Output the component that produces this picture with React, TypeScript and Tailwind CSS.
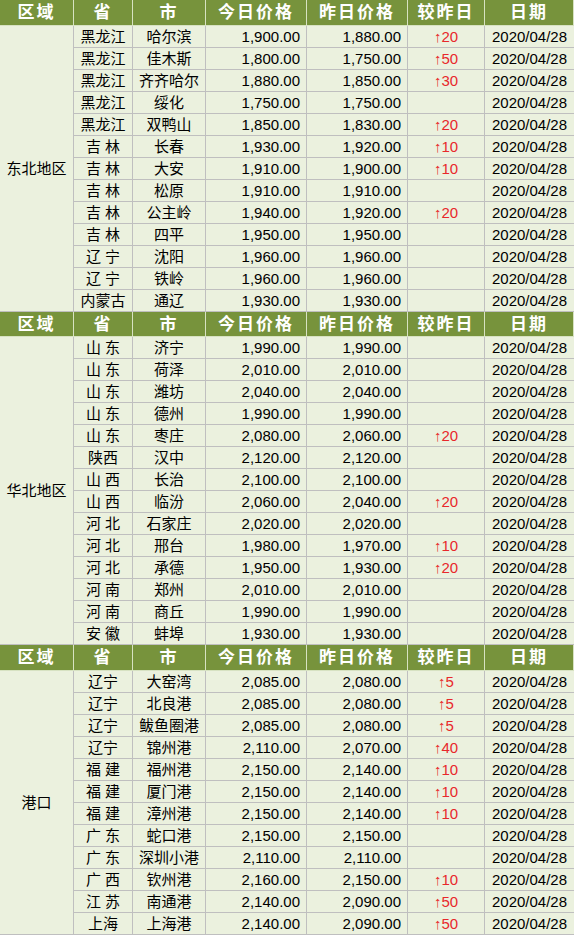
type Row = [string, string, string, string, string, string];

const sections: { region: string; rows: Row[] }[] = [
  {
    region: "东北地区",
    rows: [
      ["黑龙江", "哈尔滨", "1,900.00", "1,880.00", "20", "2020/04/28"],
      ["黑龙江", "佳木斯", "1,800.00", "1,750.00", "50", "2020/04/28"],
      ["黑龙江", "齐齐哈尔", "1,880.00", "1,850.00", "30", "2020/04/28"],
      ["黑龙江", "绥化", "1,750.00", "1,750.00", "", "2020/04/28"],
      ["黑龙江", "双鸭山", "1,850.00", "1,830.00", "20", "2020/04/28"],
      ["吉 林", "长春", "1,930.00", "1,920.00", "10", "2020/04/28"],
      ["吉 林", "大安", "1,910.00", "1,900.00", "10", "2020/04/28"],
      ["吉 林", "松原", "1,910.00", "1,910.00", "", "2020/04/28"],
      ["吉 林", "公主岭", "1,940.00", "1,920.00", "20", "2020/04/28"],
      ["吉 林", "四平", "1,950.00", "1,950.00", "", "2020/04/28"],
      ["辽 宁", "沈阳", "1,960.00", "1,960.00", "", "2020/04/28"],
      ["辽 宁", "铁岭", "1,960.00", "1,960.00", "", "2020/04/28"],
      ["内蒙古", "通辽", "1,930.00", "1,930.00", "", "2020/04/28"],
    ],
  },
  {
    region: "华北地区",
    rows: [
      ["山 东", "济宁", "1,990.00", "1,990.00", "", "2020/04/28"],
      ["山 东", "荷泽", "2,010.00", "2,010.00", "", "2020/04/28"],
      ["山 东", "潍坊", "2,040.00", "2,040.00", "", "2020/04/28"],
      ["山 东", "德州", "1,990.00", "1,990.00", "", "2020/04/28"],
      ["山 东", "枣庄", "2,080.00", "2,060.00", "20", "2020/04/28"],
      ["陕西", "汉中", "2,120.00", "2,120.00", "", "2020/04/28"],
      ["山 西", "长治", "2,100.00", "2,100.00", "", "2020/04/28"],
      ["山 西", "临汾", "2,060.00", "2,040.00", "20", "2020/04/28"],
      ["河 北", "石家庄", "2,020.00", "2,020.00", "", "2020/04/28"],
      ["河 北", "邢台", "1,980.00", "1,970.00", "10", "2020/04/28"],
      ["河 北", "承德", "1,950.00", "1,930.00", "20", "2020/04/28"],
      ["河 南", "郑州", "2,010.00", "2,010.00", "", "2020/04/28"],
      ["河 南", "商丘", "1,990.00", "1,990.00", "", "2020/04/28"],
      ["安 徽", "蚌埠", "1,930.00", "1,930.00", "", "2020/04/28"],
    ],
  },
  {
    region: "港口",
    rows: [
      ["辽宁", "大窑湾", "2,085.00", "2,080.00", "5", "2020/04/28"],
      ["辽宁", "北良港", "2,085.00", "2,080.00", "5", "2020/04/28"],
      ["辽宁", "鲅鱼圈港", "2,085.00", "2,080.00", "5", "2020/04/28"],
      ["辽宁", "锦州港", "2,110.00", "2,070.00", "40", "2020/04/28"],
      ["福 建", "福州港", "2,150.00", "2,140.00", "10", "2020/04/28"],
      ["福 建", "厦门港", "2,150.00", "2,140.00", "10", "2020/04/28"],
      ["福 建", "漳州港", "2,150.00", "2,140.00", "10", "2020/04/28"],
      ["广 东", "蛇口港", "2,150.00", "2,150.00", "", "2020/04/28"],
      ["广 东", "深圳小港", "2,110.00", "2,110.00", "", "2020/04/28"],
      ["广 西", "钦州港", "2,160.00", "2,150.00", "10", "2020/04/28"],
      ["江 苏", "南通港", "2,140.00", "2,090.00", "50", "2020/04/28"],
      ["上海", "上海港", "2,140.00", "2,090.00", "50", "2020/04/28"],
    ],
  },
];

const headers = ["区域", "省", "市", "今日价格", "昨日价格", "较昨日", "日期"];

const cjk = "font-['Liberation_Sans','Noto_Sans_CJK_SC',sans-serif]";
const cell = "border-r border-b border-[#bfbfbf] flex items-center h-[22px]";

function Section({ region, rows, headerH }: { region: string; rows: Row[]; headerH: string }) {
  return (
    <div className="grid grid-cols-[74px_59px_73px_101px_101px_77px_89px]">
      {headers.map((h) => (
        <div
          key={h}
          className={`${headerH} bg-[#77933c] text-white font-bold text-[17px] tracking-[2px] flex items-center justify-center border-r border-b border-[#d7e2c2] last:border-r-0`}
        >
          {h}
        </div>
      ))}
      <div
        className="border-r border-b border-[#bfbfbf] flex items-center justify-center text-[15px]"
        style={{ gridRow: `span ${rows.length} / span ${rows.length}` }}
      >
        {region}
      </div>
      {rows.map((r, i) => (
        <div key={i} className="contents">
          <div className={`${cell} justify-center`}>{r[0]}</div>
          <div className={`${cell} justify-center`}>{r[1]}</div>
          <div className={`${cell} justify-end pr-[6px]`}>{r[2]}</div>
          <div className={`${cell} justify-end pr-[6px]`}>{r[3]}</div>
          <div className={`${cell} justify-center text-[#e8282b]`}>{r[4] ? `↑${r[4]}` : ""}</div>
          <div className={`${cell} justify-center border-r-0`}>{r[5]}</div>
        </div>
      ))}
    </div>
  );
}

export default function App() {
  return (
    <div className={`w-[574px] h-[937px] bg-white ${cjk}`}>
      <div className="bg-[#ebf1de] text-[15px] text-black leading-none">
        <Section region={sections[0].region} rows={sections[0].rows} headerH="h-[26px]" />
        <Section region={sections[1].region} rows={sections[1].rows} headerH="h-[25px]" />
        <Section region={sections[2].region} rows={sections[2].rows} headerH="h-[26px]" />
      </div>
    </div>
  );
}
